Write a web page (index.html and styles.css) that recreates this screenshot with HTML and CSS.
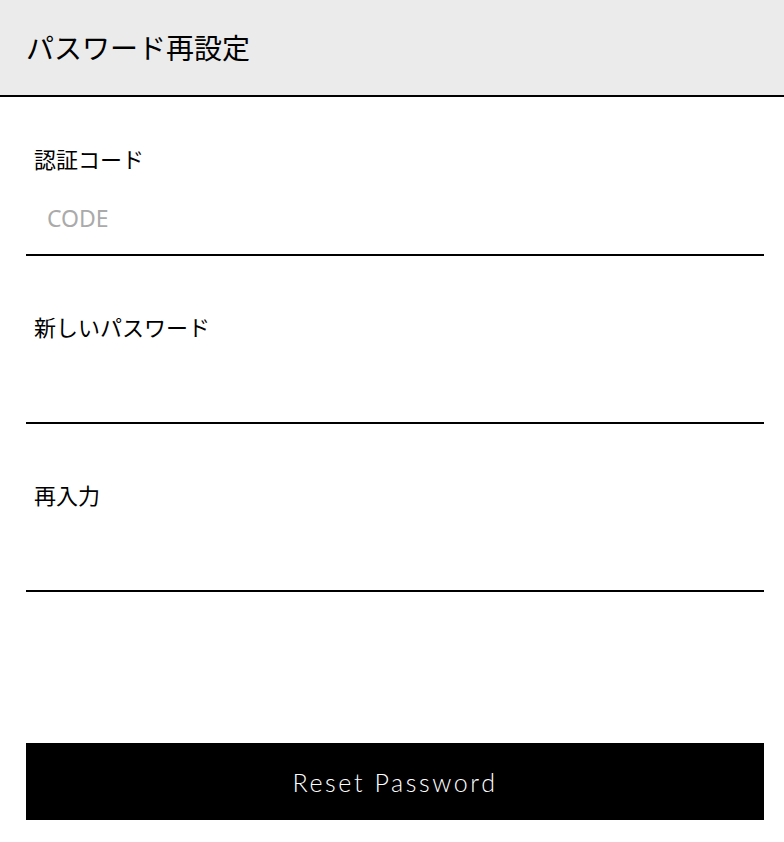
FILE: index.html
```html
<!DOCTYPE html>
<html>
    <head>
        <title>パスワード再設定</title>
        <link rel="stylesheet" href="styles.css">
    </head>
    <body>
        <div class="header">
            <h1>パスワード再設定</h1>
        </div>
        <form class="form">
            <div class="field first">
                <label for="code">認証コード</label>
                <input id="code" type="text" placeholder="CODE">
            </div>
            <div class="field">
                <label for="password">新しいパスワード</label>
                <input id="password" type="password">
            </div>
            <div class="field">
                <label for="confirm">再入力</label>
                <input id="confirm" type="password">
            </div>
            <button class="reset" type="button">Reset Password</button>
        </form>
    </body>
</html>
```

FILE: styles.css
```css
body{
    margin: 0;
    background-color: #fff;
    font-family: "Noto Sans", "Noto Sans CJK JP", sans-serif;
    color: #000;
}
.header{
    height: 95px;
    background-color: #ebebeb;
    border-bottom: 2px solid #000;
    display: flex;
    align-items: center;
    padding-left: 26px;
}
.header h1{
    margin: 0;
    font-family: "Noto Sans CJK JP", sans-serif;
    font-size: 28px;
    font-weight: normal;
    line-height: 1.4;
}
.form{
    display: flex;
    flex-direction: column;
    margin: 0 20px 0 26px;
}
.field{
    padding-top: 54px;
    border-bottom: 2px solid #000;
}
.field.first{
    padding-top: 45px;
}
.field label{
    display: block;
    padding-left: 8px;
    font-family: "Noto Sans CJK JP", sans-serif;
    font-size: 22px;
    line-height: 32px;
}
.field input{
    display: block;
    box-sizing: border-box;
    width: 100%;
    height: 72px;
    margin-top: 8px;
    padding: 0 21px;
    border: 0;
    outline: none;
    background: transparent;
    font-family: "Noto Sans", sans-serif;
    font-size: 23px;
    color: #000;
}
.field input::placeholder{
    color: #aaa;
}
.reset{
    margin-top: 151px;
    height: 77px;
    border: 0;
    background-color: #000;
    color: #fff;
    font-family: Lato, sans-serif;
    font-weight: 300;
    font-size: 25px;
    letter-spacing: 2.6px;
}
```
